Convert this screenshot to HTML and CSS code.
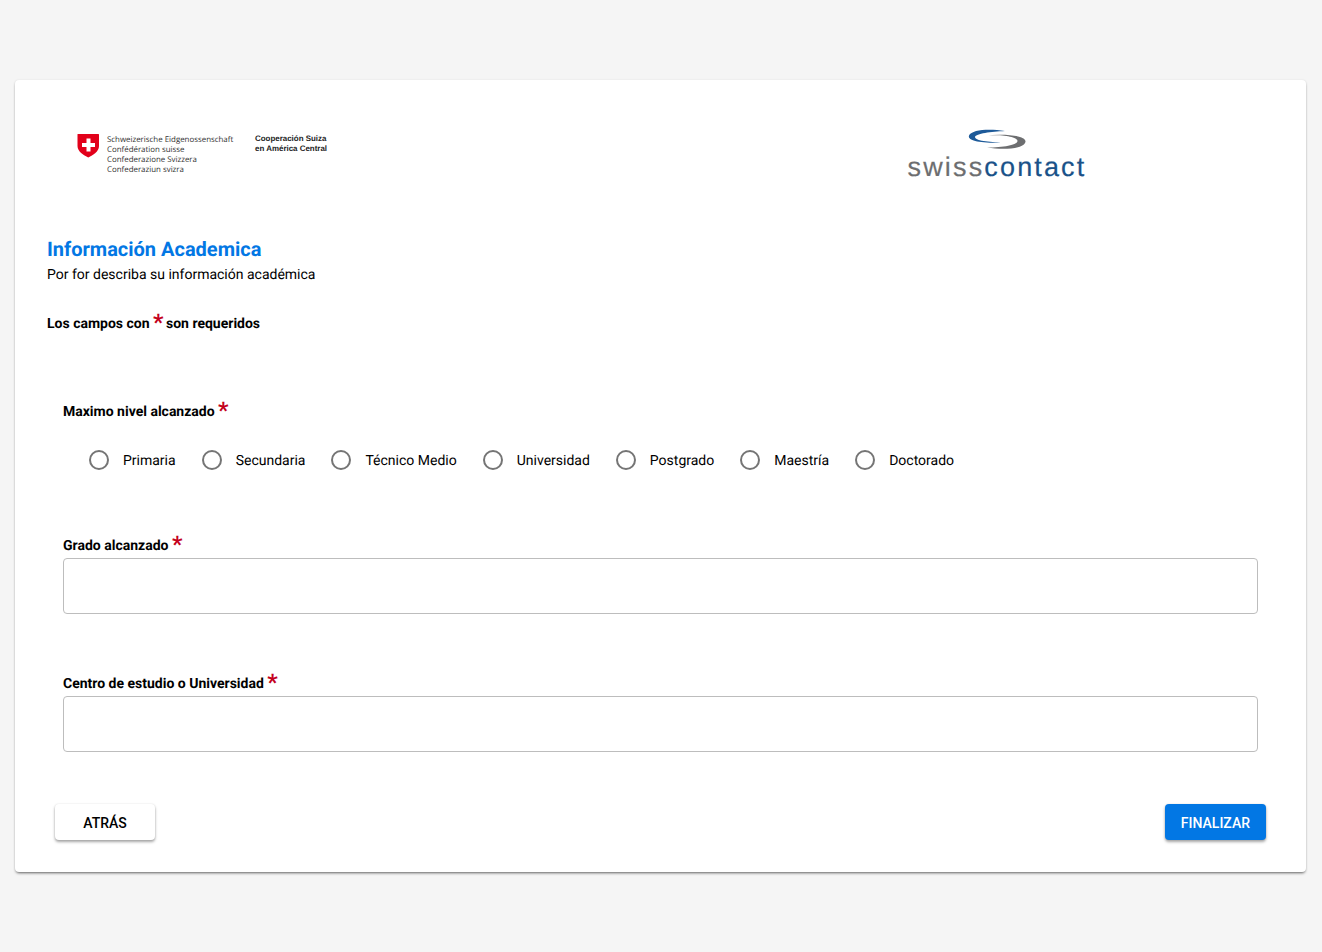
FILE: index.html
```html
<!DOCTYPE html>
<html lang="es">
<head>
    <meta charset="UTF-8">
    <meta name="viewport" content="width=device-width, initial-scale=1.0">
    <title>Información Academica</title>
    <link rel="stylesheet" href="styles.css">
</head>
<body>
    <main class="card">
        <header class="logos">
            <div class="logo-swiss">
                <svg class="shield" width="24" height="25" viewBox="0 0 24 25">
                    <path d="M.5 1.5 Q.5 1 1 1 H21.5 Q22 1 22 1.5 V13 C22 18.5 16 22 11.25 24.6 C6.5 22 .5 18.5 .5 13 Z" fill="#e2001a"/>
                    <path d="M9.5 5.5 H13.5 V10 H18 V14 H13.5 V18.5 H9.5 V14 H5 V10 H9.5 Z" fill="#fff"/>
                </svg>
                <div class="swiss-names">
                    <span>Schweizerische Eidgenossenschaft</span>
                    <span>Confédération suisse</span>
                    <span>Confederazione Svizzera</span>
                    <span>Confederaziun svizra</span>
                </div>
                <div class="swiss-office">
                    <span>Cooperación Suiza</span>
                    <span>en América Central</span>
                </div>
            </div>
            <div class="logo-contact">
                <svg class="swoosh" width="60" height="22" viewBox="0 0 60 22">
                    <path d="M38 3 C22 .6 5 1.5 2 7.5 C.5 12 10 15.5 34 14.5 C18 14 7.5 12 8 9 C9 5.5 24 3.6 38 3 Z" fill="#1d5a99"/>
                    <path d="M18 7.5 C32 6.5 50.5 8 50.5 13 C50.5 17 36 19.5 20 19.5 C38 22.5 58 20.5 58.5 13.5 C58.8 7 36 5.5 18 7.5 Z" fill="#6d6e70"/>
                </svg>
                <div class="contact-word"><span class="grey">swiss</span><span class="blue">contact</span></div>
            </div>
        </header>

        <section class="intro">
            <h1>Información Academica</h1>
            <p>Por for describa su información académica</p>
            <p class="required-note">Los campos con <span class="star">*</span> son requeridos</p>
        </section>

        <form class="form">
            <div class="field field-radios">
                <label class="field-label">Maximo nivel alcanzado <span class="star">*</span></label>
                <div class="radios">
                    <label class="radio"><span class="dot"></span>Primaria</label>
                    <label class="radio"><span class="dot"></span>Secundaria</label>
                    <label class="radio"><span class="dot"></span>Técnico Medio</label>
                    <label class="radio"><span class="dot"></span>Universidad</label>
                    <label class="radio"><span class="dot"></span>Postgrado</label>
                    <label class="radio"><span class="dot"></span>Maestría</label>
                    <label class="radio"><span class="dot"></span>Doctorado</label>
                </div>
            </div>

            <div class="field">
                <label class="field-label" for="grado">Grado alcanzado <span class="star">*</span></label>
                <input type="text" id="grado">
            </div>

            <div class="field">
                <label class="field-label" for="centro">Centro de estudio o Universidad <span class="star">*</span></label>
                <input type="text" id="centro">
            </div>

            <div class="actions">
                <button type="button" class="btn">Atrás</button>
                <button type="button" class="btn btn-primary">Finalizar</button>
            </div>
        </form>
    </main>
</body>
</html>
```

FILE: styles.css
```css
* { box-sizing: border-box; }
body { margin: 0; min-height: 952px; padding: 80px 0 0 15px; background-color: #f5f5f5; font-family: Roboto, "Liberation Sans", sans-serif; color: #000; text-rendering: geometricPrecision; }

.card { width: 1291px; height: 792px; background-color: #fff; border-radius: 4px; box-shadow: 0 2px 3px -1px rgba(0,0,0,.6), 0 0 2px rgba(0,0,0,.1); padding: 0 32px; }

.logos { display: flex; height: 130px; padding-top: 48px; }
.logo-swiss { display: flex; width: 860px; padding-left: 30px; padding-top: 5px; align-items: flex-start; }
.shield { flex: none; }
.swiss-names { display: flex; flex-direction: column; margin: 1.5px 0 0 6px; width: 148px; font-family: "Open Sans", sans-serif; font-size: 7.9px; line-height: 10.3px; color: #333; white-space: nowrap; }
.swiss-office { display: flex; flex-direction: column; margin-top: 1px; font-family: "Liberation Sans", sans-serif; font-weight: 700; font-size: 7.95px; line-height: 9.6px; color: #222; white-space: nowrap; }

.logo-contact { display: flex; flex-direction: column; align-items: center; width: 180px; }
.swoosh { flex: none; }
.contact-word { margin-top: 4px; font-family: "Liberation Sans", sans-serif; font-size: 27px; line-height: 26px; letter-spacing: 2.15px; white-space: nowrap; -webkit-text-stroke: .2px; }
.grey { color: #6d6e70; }
.blue { color: #1a5289; }

.intro h1 { margin: 0; font-size: 20px; line-height: 28px; font-weight: 700; color: #0277e4; padding-top: 25px; }
.intro p { margin: 0; font-size: 14px; line-height: 20px; padding-top: 2px; }
.intro .required-note { margin-top: 24px; padding-top: 1px; font-weight: 700; line-height: 28px; }
.required-note .star { margin-right: -1px; }
.star { color: #c4001d; font-size: 23px; font-weight: 700; line-height: 14px; vertical-align: -2px; }

.form { padding: 0 16px; }
.field { height: 138px; }
.field-label { display: block; padding-top: 1px; font-size: 14px; font-weight: 700; line-height: 20px; }
.field input { display: block; width: 1195px; height: 56px; margin-top: 2px; border: 1px solid #bdbdbd; border-radius: 4px; background: #fff; }

.field-radios { padding-top: 63px; height: 197px; }
.radios { display: flex; padding: 27px 0 0 26px; }
.radio { display: flex; align-items: center; font-size: 14px; line-height: 24px; margin-right: 26px; }
.dot { width: 20px; height: 20px; margin: 0 14px 2px 0; border: 2px solid #757575; border-radius: 50%; }

.actions { display: flex; justify-content: space-between; margin: -7px -8px 0 -8px; }
.btn { height: 36px; min-width: 100px; padding: 1px 16px 0; border: none; border-radius: 4px; background-color: #fff; color: #000; font-family: Roboto, sans-serif; font-size: 14px; font-weight: 500; text-transform: uppercase; box-shadow: 0 2px 3px rgba(0,0,0,.35), 0 0 2px rgba(0,0,0,.1); }
.btn-primary { background-color: #0277e4; color: #fff; }
```
